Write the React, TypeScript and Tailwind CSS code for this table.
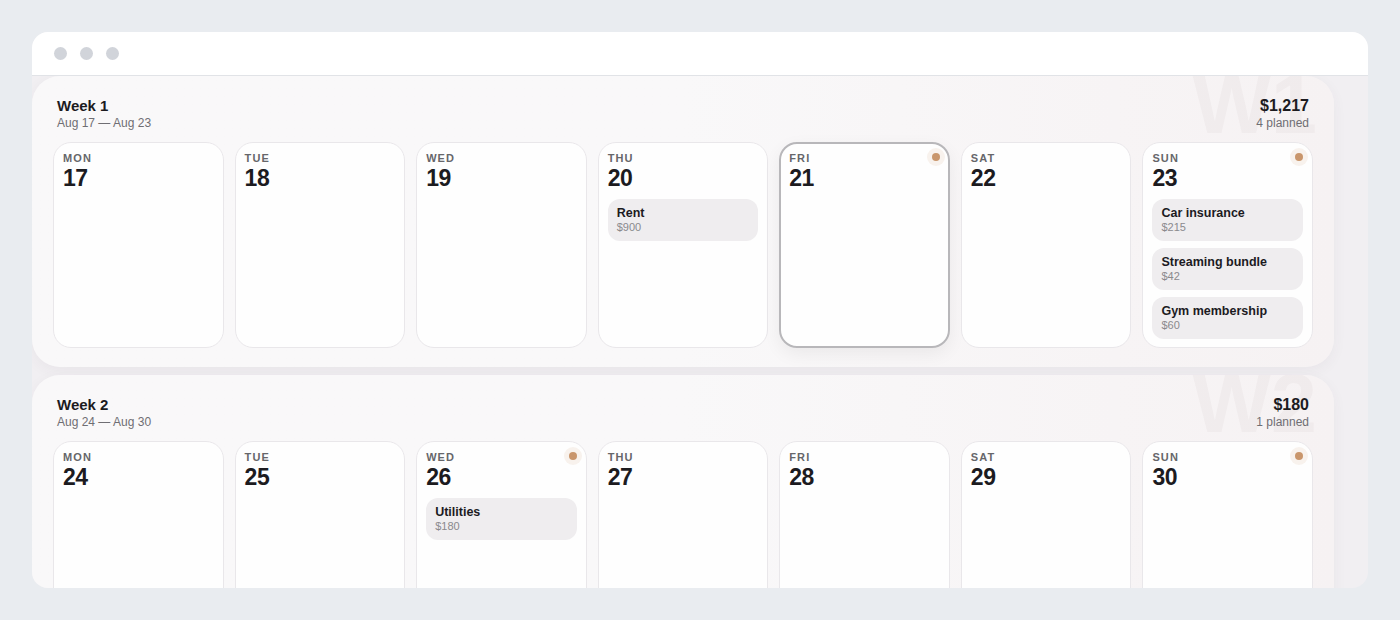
import React from "react";

type Item = { name: string; amount: string };
type Day = { dow: string; num: number; items?: Item[]; dot?: boolean; selected?: boolean };
type Week = { title: string; range: string; total: string; planned: string; wm: string; days: Day[] };

const weeks: Week[] = [
  {
    title: "Week 1",
    range: "Aug 17 — Aug 23",
    total: "$1,217",
    planned: "4 planned",
    wm: "W1",
    days: [
      { dow: "MON", num: 17 },
      { dow: "TUE", num: 18 },
      { dow: "WED", num: 19 },
      { dow: "THU", num: 20, items: [{ name: "Rent", amount: "$900" }] },
      { dow: "FRI", num: 21, dot: true, selected: true },
      { dow: "SAT", num: 22 },
      {
        dow: "SUN",
        num: 23,
        dot: true,
        items: [
          { name: "Car insurance", amount: "$215" },
          { name: "Streaming bundle", amount: "$42" },
          { name: "Gym membership", amount: "$60" },
        ],
      },
    ],
  },
  {
    title: "Week 2",
    range: "Aug 24 — Aug 30",
    total: "$180",
    planned: "1 planned",
    wm: "W2",
    days: [
      { dow: "MON", num: 24 },
      { dow: "TUE", num: 25 },
      { dow: "WED", num: 26, dot: true, items: [{ name: "Utilities", amount: "$180" }] },
      { dow: "THU", num: 27 },
      { dow: "FRI", num: 28 },
      { dow: "SAT", num: 29 },
      { dow: "SUN", num: 30, dot: true },
    ],
  },
];

function DayCell({ d }: { d: Day }) {
  return (
    <div
      className={
        "relative h-[206px] rounded-[18px] bg-white/90 px-[9px] pt-[8px] " +
        (d.selected
          ? "border-[2px] border-[#b8b7ba] shadow-[0_6px_18px_rgba(0,0,0,0.06)]"
          : "border border-[#e9e7ea]")
      }
    >
      {d.dot && (
        <div
          className={
            "absolute flex h-[18px] w-[18px] items-center justify-center rounded-full bg-[#f8f2ed] " +
            (d.selected ? "right-[3px] top-[4px]" : "right-[4px] top-[5px]")
          }
        >
          <div className="h-[8px] w-[8px] rounded-full bg-[#c9966c]" />
        </div>
      )}
      <div className={d.selected ? "-ml-px -mt-px" : ""}>
        <div className="text-[11px] font-bold leading-[14px] tracking-[0.1em] text-[#66666a]">{d.dow}</div>
        <div className="text-[23px] font-bold leading-[26px] tracking-[-0.02em] text-[#1c1b1f]">{d.num}</div>
        {d.items && (
          <div className="mt-[8px] flex flex-col gap-[7px]">
            {d.items.map((it) => (
              <div key={it.name} className="h-[42px] rounded-[12px] bg-[#efedef] px-[9px] pt-[7px]">
                <div className="text-[12.5px] font-bold leading-[15px] text-[#1c1b1f]">{it.name}</div>
                <div className="text-[11px] leading-[13px] text-[#8a898d]">{it.amount}</div>
              </div>
            ))}
          </div>
        )}
      </div>
    </div>
  );
}

function WeekCard({ w }: { w: Week }) {
  return (
    <div className="relative shrink-0 overflow-hidden rounded-[28px] bg-gradient-to-r from-[#f9f8f9] via-[#f9f8f9] to-[#f6f2f3] px-[21px] pb-[19px] pt-[21px] shadow-[0_4px_14px_rgba(80,60,70,0.05)]">
      <div
        aria-hidden="true"
        className="pointer-events-none absolute right-[17px] top-[-13px] select-none text-[83px] font-bold leading-none text-[#5a4550]/[0.04]"
      >
        {w.wm}
      </div>
      <div className="relative flex items-start justify-between px-[4px]">
        <div>
          <div className="text-[15px] font-bold leading-[18px] text-[#1c1b1f]">{w.title}</div>
          <div className="text-[12px] leading-[16px] text-[#6f6e73]">{w.range}</div>
        </div>
        <div className="flex flex-col items-end">
          <div className="text-[16px] font-bold leading-[18px] text-[#1c1b1f]">{w.total}</div>
          <div className="text-[12px] leading-[16px] text-[#6f6e73]">{w.planned}</div>
        </div>
      </div>
      <div className="relative mt-[11px] grid grid-cols-7 gap-[11px]">
        {w.days.map((d) => (
          <DayCell key={d.num} d={d} />
        ))}
      </div>
    </div>
  );
}

export default function App() {
  return (
    <div
      className="h-[620px] w-[1400px] bg-[#e9ecf0] p-[32px]"
      style={{ fontFamily: '"Liberation Sans", Arial, sans-serif' }}
    >
      <div className="flex h-[556px] flex-col overflow-hidden rounded-[16px] bg-[#f1eff2]">
        <div className="flex h-[44px] shrink-0 items-center gap-[13px] border-b border-[#e1e3e7] bg-white pl-[22px]">
          <div className="h-[13px] w-[13px] rounded-full bg-[#d1d4da]" />
          <div className="h-[13px] w-[13px] rounded-full bg-[#d1d4da]" />
          <div className="h-[13px] w-[13px] rounded-full bg-[#d1d4da]" />
        </div>
        <div className="flex min-h-0 flex-1 flex-col gap-[8px] overflow-hidden pr-[34px]">
          {weeks.map((w) => (
            <WeekCard key={w.title} w={w} />
          ))}
        </div>
      </div>
    </div>
  );
}
